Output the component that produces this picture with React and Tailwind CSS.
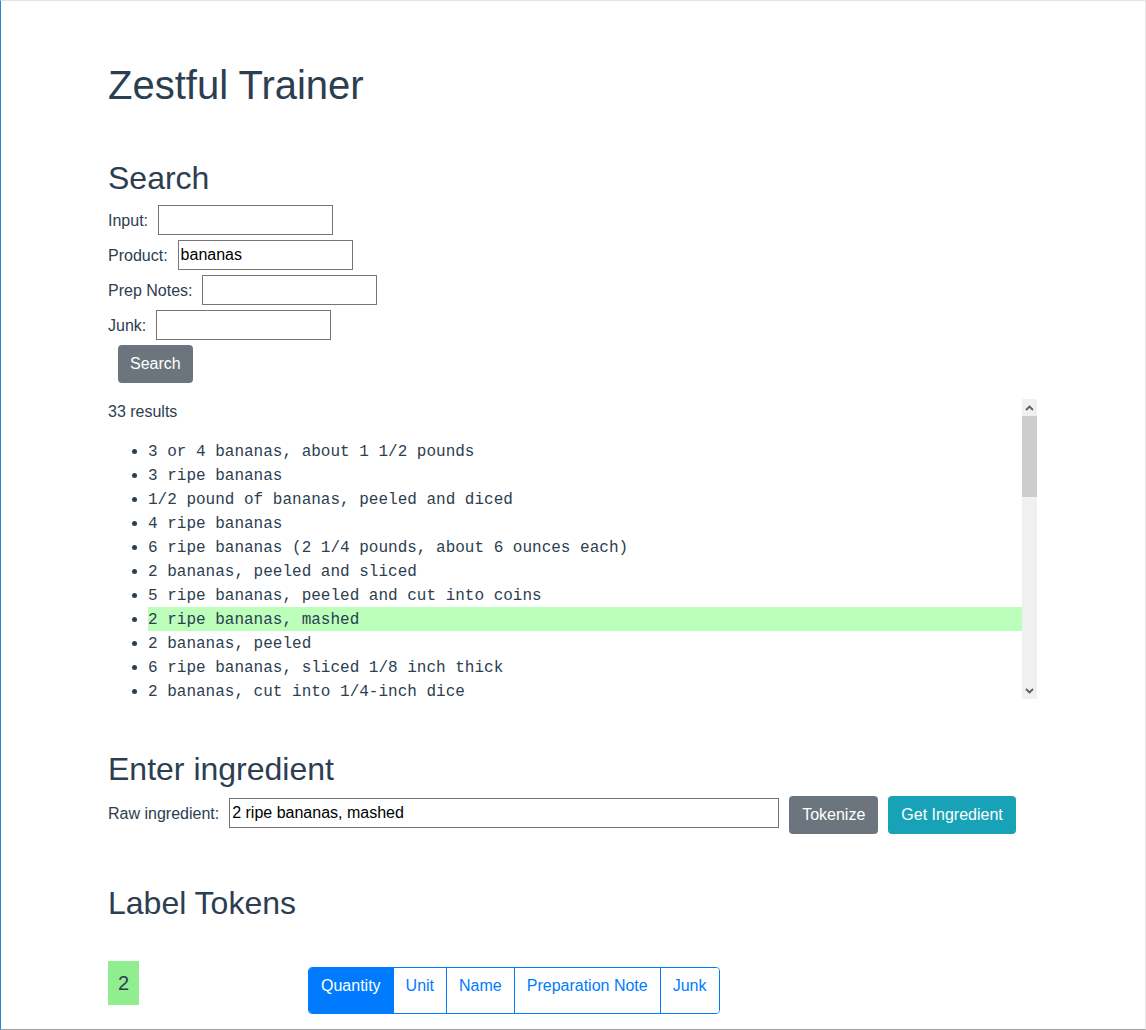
import React, { useState } from 'react';

// first page of the 33 results (the rest is below the fold of the scroll box)
const results = [
  '3 or 4 bananas, about 1 1/2 pounds',
  '3 ripe bananas',
  '1/2 pound of bananas, peeled and diced',
  '4 ripe bananas',
  '6 ripe bananas (2 1/4 pounds, about 6 ounces each)',
  '2 bananas, peeled and sliced',
  '5 ripe bananas, peeled and cut into coins',
  '2 ripe bananas, mashed',
  '2 bananas, peeled',
  '6 ripe bananas, sliced 1/8 inch thick',
  '2 bananas, cut into 1/4-inch dice',
];

const searchFields = [
  { label: 'Input:', value: '' },
  { label: 'Product:', value: 'bananas' },
  { label: 'Prep Notes:', value: '' },
  { label: 'Junk:', value: '' },
];

const labels = ['Quantity', 'Unit', 'Name', 'Preparation Note', 'Junk'];

const inputClass =
  'w-[175px] h-[30px] border border-[#767676] px-[2px] text-[16px] text-black outline-none';

const Scrollbar = () => (
  <div className="w-[15px] h-full bg-[#f0f0f0] flex flex-col">
    <div className="h-[17px] flex items-center justify-center">
      <svg width="9" height="6" viewBox="0 0 9 6">
        <path d="M1 5 L4.5 1.5 L8 5" fill="none" stroke="#5f5f5f" strokeWidth="1.8" />
      </svg>
    </div>
    <div className="h-[81px] bg-[#cdcdcd]" />
    <div className="flex-1" />
    <div className="h-[17px] flex items-center justify-center">
      <svg width="9" height="6" viewBox="0 0 9 6">
        <path d="M1 1 L4.5 4.5 L8 1" fill="none" stroke="#5f5f5f" strokeWidth="1.8" />
      </svg>
    </div>
  </div>
);

const App = () => {
  const [raw, setRaw] = useState('2 ripe bananas, mashed');
  const [active, setActive] = useState('Quantity');

  return (
    <div
      className="h-[1030px] overflow-hidden border-t border-l border-r border-b border-t-[#e2e2e2] border-l-[#1d87e4] border-r-[#e8e8e8] border-b-[#a0a0a0] bg-white text-[#2c3e50] text-[16px] leading-[24px]"
      style={{ fontFamily: '"Liberation Sans", Arial, sans-serif' }}
    >
      <div className="pl-[107px] pr-[107px]">
        <h1 className="mt-[60px] mb-[50px] text-[40px] leading-[48px] font-normal">
          Zestful Trainer
        </h1>

        <h2 className="text-[32px] leading-[38px] font-normal mb-[8px]">Search</h2>
        <div className="flex flex-col gap-[5px]">
          {searchFields.map((f) => (
            <div key={f.label} className="flex items-center gap-[10px] h-[30px]">
              <label className="pt-[1px]">{f.label}</label>
              <input className={inputClass} defaultValue={f.value} />
            </div>
          ))}
          <div>
            <button className="ml-[10px] h-[38px] px-[12px] rounded-[4px] bg-[#6c757d] text-white">
              Search
            </button>
          </div>
        </div>

        <div className="mt-[16px] h-[300px] w-[929px] flex">
          <div className="flex-1">
            <p className="mb-[15px] pt-[1px]">33 results</p>
            <ul
              className="list-disc pl-[40px] text-[16px] leading-[24px] marker:[font-family:'Liberation_Sans',sans-serif]"
              style={{ fontFamily: '"Liberation Mono", "Courier New", monospace' }}
            >
              {results.map((r, i) => (
                <li key={i} className={'h-[24px]' + (i === 7 ? ' bg-[#bbffbb]' : '')}>
                  {r}
                </li>
              ))}
            </ul>
          </div>
          <Scrollbar />
        </div>

        <h2 className="mt-[51px] text-[32px] leading-[38px] font-normal mb-[8px]">
          Enter ingredient
        </h2>
        <div className="flex items-start gap-[10px]">
          <div className="mt-[2px] h-[30px] flex items-center gap-[10px]">
            <label className="pt-[1px]">Raw ingredient:</label>
            <input
              className="w-[550px] h-[30px] border border-[#767676] px-[2px] text-[16px] text-black outline-none"
              value={raw}
              onChange={(e) => setRaw(e.target.value)}
            />
          </div>
          <button className="h-[38px] px-[13px] rounded-[4px] bg-[#6c757d] text-white">
            Tokenize
          </button>
          <button className="h-[38px] px-[13px] rounded-[4px] bg-[#17a2b8] text-white">
            Get Ingredient
          </button>
        </div>

        <h2 className="mt-[50px] text-[32px] leading-[38px] font-normal">Label Tokens</h2>
        <div className="mt-[39px] flex items-start">
          <div className="w-[31px] h-[44px] flex items-center justify-center bg-[#90ee90] text-[20px]">
            2
          </div>
          <div className="ml-[169px] mt-[6px] flex h-[47px] border border-[#007bff] rounded-[4px] overflow-hidden">
            {labels.map((l, i) => (
              <button
                key={l}
                onClick={() => setActive(l)}
                className={
                  (active === l ? 'bg-[#007bff] text-white' : 'bg-white text-[#007bff]') +
                  (i > 0 ? ' border-l border-[#007bff]' : '') +
                  ' px-[12px] pt-[6px] pb-[15px] leading-[24px]'
                }
              >
                {l}
              </button>
            ))}
          </div>
        </div>
      </div>
    </div>
  );
};

export default App;
